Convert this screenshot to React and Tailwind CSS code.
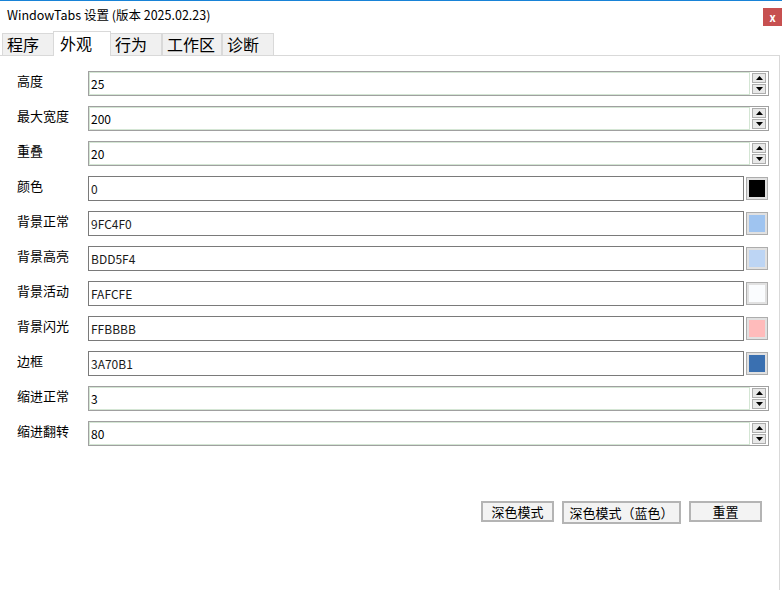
import React from 'react';

const rows = [
    { label: '高度', value: '25', kind: 'spin' },
    { label: '最大宽度', value: '200', kind: 'spin' },
    { label: '重叠', value: '20', kind: 'spin' },
    { label: '颜色', value: '0', kind: 'color', swatch: 'bg-[#000000]' },
    { label: '背景正常', value: '9FC4F0', kind: 'color', swatch: 'bg-[#9fc4f0]' },
    { label: '背景高亮', value: 'BDD5F4', kind: 'color', swatch: 'bg-[#bdd5f4]' },
    { label: '背景活动', value: 'FAFCFE', kind: 'color', swatch: 'bg-[#fafcfe]' },
    { label: '背景闪光', value: 'FFBBBB', kind: 'color', swatch: 'bg-[#ffbbbb]' },
    { label: '边框', value: '3A70B1', kind: 'color', swatch: 'bg-[#3a70b1]' },
    { label: '缩进正常', value: '3', kind: 'spin' },
    { label: '缩进翻转', value: '80', kind: 'spin' },
];

const tabs = [
    { t: '程序', w: 'w-[52px]' },
    { t: '外观', w: 'w-[58px]' },
    { t: '行为', w: 'w-[52px]' },
    { t: '工作区', w: 'w-[60px]' },
    { t: '诊断', w: 'w-[52px]' },
];

const Spinner = () => (
    <div className="flex flex-col gap-[1px] px-[2px] py-[1px]">
        <div className="w-[14px] h-[10px] bg-[#e8e8e8] border border-[#adadad] flex items-center justify-center">
            <svg width="7" height="4" viewBox="0 0 7 4"><path d="M3.5 0 L7 4 L0 4 Z" fill="#000" /></svg>
        </div>
        <div className="w-[14px] h-[10px] bg-[#e8e8e8] border border-[#adadad] flex items-center justify-center">
            <svg width="7" height="4" viewBox="0 0 7 4"><path d="M0 0 L7 0 L3.5 4 Z" fill="#000" /></svg>
        </div>
    </div>
);

const Row = ({ row }) => (
    <div className="flex items-center h-[35px]">
        <div className="w-[88px] shrink-0 pl-[17px] text-[13px] text-black -mt-[6px] whitespace-nowrap">{row.label}</div>
        {row.kind === 'spin' ? (
            <div className="flex items-center w-[681px] h-[25px] border border-[#a0a0a0] bg-white">
                <div className="flex-1 h-full border border-[#d4e6d4] flex items-center pl-[1px] text-[12px] text-black">{row.value}</div>
                <Spinner />
            </div>
        ) : (
            <div className="flex items-center gap-[2px]">
                <div className="w-[656px] h-[25px] border border-[#7a7a7a] bg-white flex items-center pl-[2px] text-[12px] text-[#1a1a1a]">{row.value}</div>
                <div className="w-[22px] h-[23px] border border-[#adadad] bg-[#e1e1e1] flex items-center justify-center">
                    <div className={`w-[16px] h-[17px] ${row.swatch}`}></div>
                </div>
            </div>
        )}
    </div>
);

const App = () => {
    return (
        <div className="w-[782px] h-[590px] bg-white border-t border-[#1883d7] flex flex-col overflow-hidden" style={{ fontFamily: '"Noto Sans CJK SC", "Noto Sans", sans-serif' }}>
            <div className="flex items-start h-[30px] shrink-0">
                <div className="flex-1 pl-[7px] pt-[8px] text-[12.5px] text-black leading-none">WindowTabs 设置 (版本 2025.02.23)</div>
                <div className="mt-[7px] w-[19px] h-[18px] bg-[#c75050] text-white text-[11px] font-bold flex items-center justify-center leading-none">x</div>
            </div>

            <div className="flex items-end h-[24px] pl-[2px] shrink-0">
                {tabs.map((t, i) =>
                    i === 1 ? (
                        <div key={t.t} className={`${t.w} h-[25px] pl-[6px] bg-white border border-b-0 border-[#d9d9d9] text-[16px] leading-[22px] text-black -mx-[1px] z-10 relative top-[1px]`}>{t.t}</div>
                    ) : (
                        <div key={t.t} className={`${t.w} h-[22px] pl-[4px] bg-[#f0f0f0] border border-b-0 border-[#d9d9d9] text-[16px] leading-[21px] text-black`}>{t.t}</div>
                    )
                )}
            </div>

            <div className="flex-1 mr-[2px] border-t border-r border-[#d9d9d9] flex flex-col pt-[10px]">
                {rows.map((r) => (
                    <Row key={r.label} row={r} />
                ))}
                <div className="flex items-start gap-[8px] pl-[481px] mt-[50px] text-[13px]">
                    <button className="w-[73px] h-[21px] border-2 border-[#b4b4b4] bg-[#f3f3f3] leading-none flex items-center justify-center">深色模式</button>
                    <button className="w-[119px] h-[23px] border-2 border-[#b4b4b4] bg-[#f3f3f3] leading-none flex items-center justify-center">深色模式（蓝色）</button>
                    <button className="w-[73px] h-[21px] border-2 border-[#b4b4b4] bg-[#f3f3f3] leading-none flex items-center justify-center">重置</button>
                </div>
            </div>
        </div>
    );
};

export default App;
